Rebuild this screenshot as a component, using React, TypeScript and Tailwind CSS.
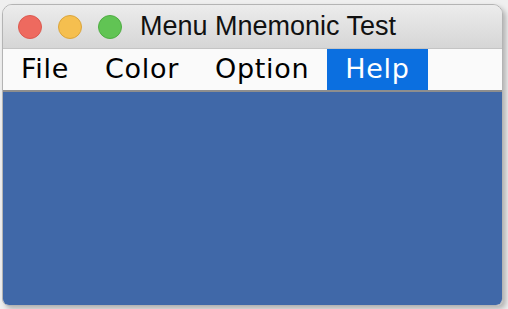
const menus = ['File', 'Color', 'Option', 'Help']

export default function App() {
  const active = 'Help'

  return (
    <div className="h-[309px] w-[508px] overflow-hidden bg-[#efefef] pl-[2px] pt-[4px]">
      <div className="flex h-[302px] w-[501px] flex-col overflow-hidden rounded-t-[10px] rounded-b-[7px] border border-[#b4b4b4] shadow-[3px_3px_5px_rgba(0,0,0,0.25)]">
        {/* Title bar */}
        <div className="flex h-[44px] shrink-0 items-center bg-gradient-to-b from-[#ececec] to-[#d6d6d6] pl-[15px] border-b border-[#c4c4c4]">
          <div className="flex gap-[16px]">
            <span className="h-[24px] w-[24px] rounded-full border border-[#dc5a50] bg-[#ee6a5f]" />
            <span className="h-[24px] w-[24px] rounded-full border border-[#dba53c] bg-[#f5bf4f]" />
            <span className="h-[24px] w-[24px] rounded-full border border-[#4fad43] bg-[#61c454]" />
          </div>
          <span className="ml-[18px] text-[27px] leading-none text-[#111] [font-family:'Liberation_Sans',Arial,sans-serif]">
            Menu Mnemonic Test
          </span>
        </div>

        {/* Menu bar */}
        <div className="flex h-[43px] shrink-0 border-b-2 border-[#8e8e8e] bg-[#fafafa] [font-family:'DejaVu_Sans',sans-serif]">
          {menus.map((m) => (
            <div
              key={m}
              className={
                m === active
                  ? 'flex items-center bg-[#0b6fe0] px-[18px] text-[27px] tracking-[0.7px] text-white'
                  : 'flex items-center px-[18px] text-[27px] tracking-[0.7px] text-black'
              }
            >
              {m}
            </div>
          ))}
        </div>

        {/* Content */}
        <div className="flex-1 bg-[#4068a8]" />
      </div>
    </div>
  )
}
